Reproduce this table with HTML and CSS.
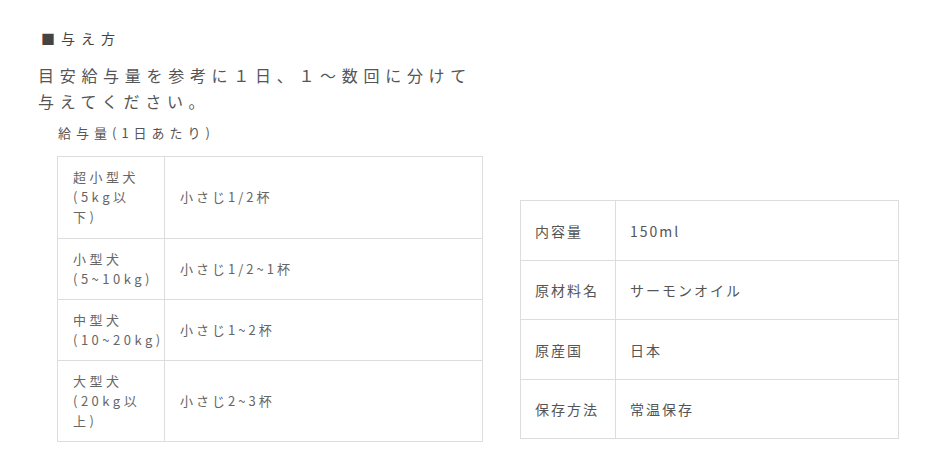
FILE: index.html
```html
<!DOCTYPE html>
<html lang="ja">
<head>
<meta charset="utf-8">
<link rel="stylesheet" href="styles.css">
</head>
<body>
<div class="page">
  <div class="left">
    <h2 class="heading">■与え方</h2>
    <p class="lead">目安給与量を参考に１日、１～数回に分けて<br>与えてください。</p>
    <p class="sub">給与量(1日あたり)</p>
    <table class="feed">
      <tr class="tall"><th>超小型犬<br>(5kg以<br>下)</th><td>小さじ1/2杯</td></tr>
      <tr><th>小型犬<br>(5~10kg)</th><td>小さじ1/2~1杯</td></tr>
      <tr><th>中型犬<br>(10~20kg)</th><td>小さじ1~2杯</td></tr>
      <tr><th>大型犬<br>(20kg以<br>上)</th><td>小さじ2~3杯</td></tr>
    </table>
  </div>
  <table class="spec">
    <tr><th>内容量</th><td>150ml</td></tr>
    <tr class="short"><th>原材料名</th><td>サーモンオイル</td></tr>
    <tr><th>原産国</th><td>日本</td></tr>
    <tr class="short"><th>保存方法</th><td>常温保存</td></tr>
  </table>
</div>
</body>
</html>
```
FILE: styles.css
```css
html, body {
  margin: 0;
  padding: 0;
  background: #fff;
}
body {
  font-family: "Noto Sans CJK JP", "Noto Sans", sans-serif;
  color: #555;
}
.page {
  display: flex;
  align-items: flex-end;
  gap: 37px;
  padding: 28px 0 0 38px;
  width: 900px;
  box-sizing: border-box;
}
.left {
  width: 445px;
  flex: none;
}
.heading {
  margin: 0 0 0 3px;
  font-size: 14px;
  font-weight: normal;
  line-height: 20px;
  letter-spacing: 6px;
  color: #444;
}
.lead {
  margin: 14px 0 0;
  font-size: 16px;
  line-height: 26px;
  letter-spacing: 5.7px;
  color: #555;
}
.sub {
  margin: 9px 0 0 20px;
  font-size: 13px;
  line-height: 20px;
  letter-spacing: 5px;
  color: #555;
}
table {
  border-collapse: collapse;
}
.feed {
  margin: 13px 0 0 19px;
  width: 426px;
}
.feed th, .feed td {
  border: 1px solid #ddd;
  font-weight: normal;
  text-align: left;
  font-size: 13px;
  line-height: 20px;
  color: #666;
  padding: 10px 0 10px 15px;
  vertical-align: middle;
}
.feed .tall th, .feed .tall td {
  padding-bottom: 11px;
}
.feed th {
  width: 91px;
  letter-spacing: 3.5px;
}
.feed td {
  letter-spacing: 3px;
}
.spec {
  width: 379px;
  margin-bottom: 3px;
}
.spec th, .spec td {
  border: 1px solid #ddd;
  font-weight: normal;
  text-align: left;
  font-size: 14px;
  line-height: 20px;
  letter-spacing: 2px;
  color: #555;
  height: 60px;
  box-sizing: border-box;
  padding: 0 0 0 14px;
  vertical-align: middle;
}
.spec .short th, .spec .short td {
  height: 59px;
}
.spec th {
  width: 95px;
}
```
